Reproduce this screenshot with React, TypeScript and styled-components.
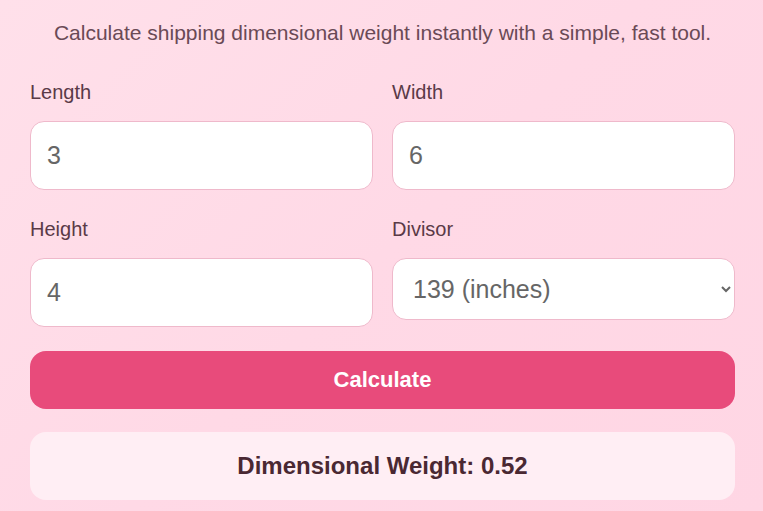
import React, { useState } from 'react';
import styled, { createGlobalStyle } from 'styled-components';

const GlobalStyle = createGlobalStyle`
    html, body {
        margin: 0;
        padding: 0;
    }
    body {
        font-family: "Liberation Sans", Arial, sans-serif;
        background: linear-gradient(135deg, #ffe0ea 0%, #ffd9e6 50%, #ffd6e4 100%);
        min-height: 511px;
    }
`;

const Container = styled.div`
    box-sizing: border-box;
    width: 763px;
    padding: 20px 28px 10px 30px;
`;

const Description = styled.p`
    margin: 0 0 35px;
    text-align: center;
    font-size: 21px;
    line-height: 26px;
    color: #6a4a56;
`;

const Grid = styled.div`
    display: grid;
    grid-template-columns: minmax(0, 1fr) minmax(0, 1fr);
    column-gap: 19px;
    row-gap: 28px;
    margin-bottom: 24px;
`;

const Field = styled.div`
    display: flex;
    flex-direction: column;
    min-width: 0;
`;

const Label = styled.label`
    font-size: 20px;
    line-height: 22px;
    color: #5a3a47;
    margin-bottom: 18px;
`;

const Input = styled.input`
    box-sizing: border-box;
    width: 100%;
    min-width: 0;
    height: 69px;
    padding: 0 16px;
    font-family: "Liberation Sans", Arial, sans-serif;
    font-size: 25px;
    color: #666;
    background: #fff;
    border: 1px solid #efb9cb;
    border-radius: 14px;
    outline: none;
`;

const Select = styled.select`
    box-sizing: border-box;
    width: 100%;
    min-width: 0;
    height: 62px;
    padding: 0 14px 0 16px;
    font-family: "Liberation Sans", Arial, sans-serif;
    font-size: 25px;
    color: #666;
    background: #fff;
    border: 1px solid #efb9cb;
    border-radius: 14px;
    outline: none;
`;

const Button = styled.button`
    display: block;
    width: 100%;
    height: 58px;
    border: none;
    border-radius: 16px;
    background: #e84b7b;
    color: #fff;
    font-family: "Liberation Sans", Arial, sans-serif;
    font-size: 22px;
    font-weight: bold;
    cursor: pointer;
    margin-bottom: 23px;
`;

const Result = styled.div`
    height: 68px;
    display: flex;
    align-items: center;
    justify-content: center;
    border-radius: 16px;
    background: #ffeef4;
    color: #4a2832;
    font-size: 24px;
    font-weight: bold;
`;

const App: React.FC = () => {
    const [length, setLength] = useState('3');
    const [width, setWidth] = useState('6');
    const [height, setHeight] = useState('4');
    const [divisor, setDivisor] = useState('139');
    const [result, setResult] = useState('0.52');

    const calculate = () => {
        const v = (Number(length) * Number(width) * Number(height)) / Number(divisor);
        setResult(isFinite(v) ? v.toFixed(2) : '0.00');
    };

    return (
        <>
            <GlobalStyle />
            <Container>
                <Description>
                    Calculate shipping dimensional weight instantly with a simple, fast tool.
                </Description>
                <Grid>
                    <Field>
                        <Label>Length</Label>
                        <Input value={length} onChange={e => setLength(e.target.value)} />
                    </Field>
                    <Field>
                        <Label>Width</Label>
                        <Input value={width} onChange={e => setWidth(e.target.value)} />
                    </Field>
                    <Field>
                        <Label>Height</Label>
                        <Input value={height} onChange={e => setHeight(e.target.value)} />
                    </Field>
                    <Field>
                        <Label>Divisor</Label>
                        <Select value={divisor} onChange={e => setDivisor(e.target.value)}>
                            <option value="139">139 (inches)</option>
                            <option value="166">166 (inches)</option>
                            <option value="5000">5000 (cm)</option>
                            <option value="6000">6000 (cm)</option>
                        </Select>
                    </Field>
                </Grid>
                <Button onClick={calculate}>Calculate</Button>
                <Result>Dimensional Weight: {result}</Result>
            </Container>
        </>
    );
};

export default App;
